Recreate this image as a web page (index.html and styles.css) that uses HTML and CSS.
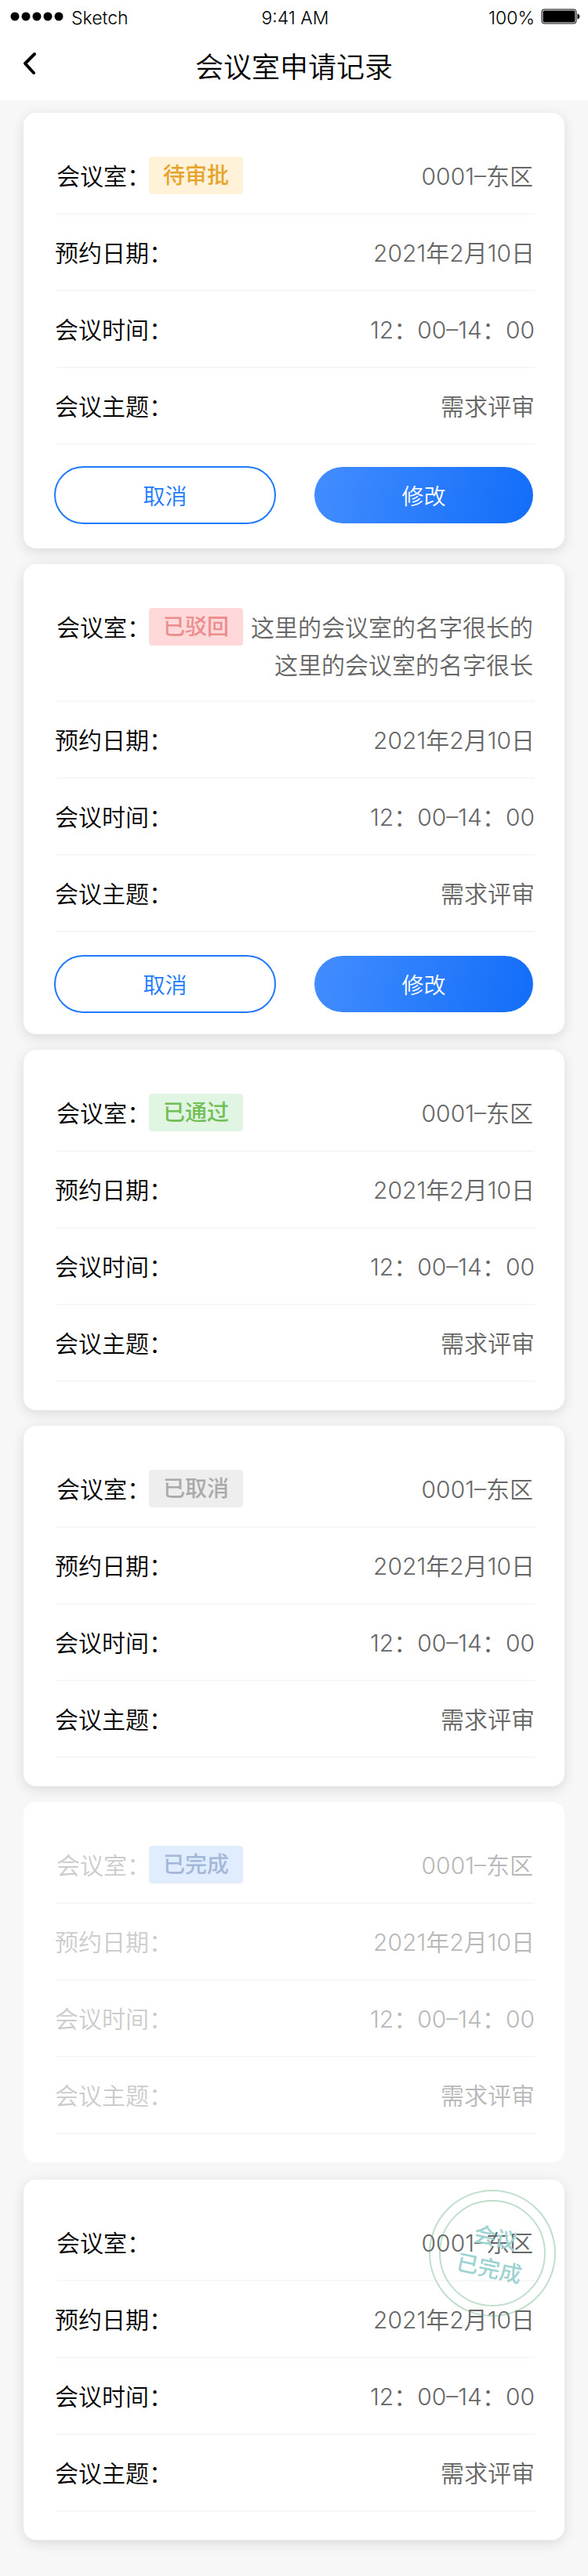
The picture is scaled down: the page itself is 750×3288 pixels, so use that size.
FILE: index.html
```html
<!DOCTYPE html>
<html lang="zh-CN">
<head>
<meta charset="utf-8">
<meta name="viewport" content="width=device-width, initial-scale=1">
<title>会议室申请记录</title>
<link rel="stylesheet" href="styles.css">
</head>
<body>
<header class="header">
  <div class="status">
    <div class="status-left">
      <svg class="signal" width="70" height="12" viewBox="0 0 70 12" aria-hidden="true"><circle cx="6" cy="6" r="5.5"/><circle cx="20" cy="6" r="5.5"/><circle cx="34" cy="6" r="5.5"/><circle cx="48" cy="6" r="5.5"/><circle cx="62" cy="6" r="5.5"/></svg>
      <span>Sketch</span>
    </div>
    <span class="status-time">9:41 AM</span>
    <div class="status-right">
      <span>100%</span>
      <svg class="battery" width="50" height="20" viewBox="0 0 50 20" aria-hidden="true"><rect x="1" y="1" width="44" height="18" rx="3" fill="none" stroke="#000"/><rect x="2.5" y="2.5" width="41" height="15" rx="1.5"/><path d="M46.500 6.500c2 .5 2.800 1.800 2.800 3.500s-.8 3-2.800 3.500z"/></svg>
    </div>
  </div>
  <nav class="nav">
    <button class="back" type="button" aria-label="返回"><svg width="18" height="30" viewBox="0 0 18 30" aria-hidden="true"><path d="M15 3 3 15l11 12"/></svg></button>
    <h1 class="title">会议室申请记录</h1>
  </nav>
</header>
<main class="list">
  <article class="card">
    <dl class="rows">
      <div class="row row-room"><dt>会议室：</dt><dd class="badge badge-pending">待审批</dd><dd class="value">0001–东区</dd></div>
      <div class="row"><dt>预约日期：</dt><dd class="value">2021年2月10日</dd></div>
      <div class="row"><dt>会议时间：</dt><dd class="value">12：00–14：00</dd></div>
      <div class="row"><dt>会议主题：</dt><dd class="value">需求评审</dd></div>
    </dl>
    <div class="actions"><button class="btn btn-outline" type="button">取消</button><button class="btn btn-primary" type="button">修改</button></div>
  </article>
  <article class="card">
    <dl class="rows">
      <div class="row row-room row-multiline"><dt>会议室：</dt><dd class="badge badge-rejected">已驳回</dd><dd class="value">这里的会议室的名字很长的这里的会议室的名字很长</dd></div>
      <div class="row"><dt>预约日期：</dt><dd class="value">2021年2月10日</dd></div>
      <div class="row"><dt>会议时间：</dt><dd class="value">12：00–14：00</dd></div>
      <div class="row"><dt>会议主题：</dt><dd class="value">需求评审</dd></div>
    </dl>
    <div class="actions actions-low"><button class="btn btn-outline" type="button">取消</button><button class="btn btn-primary" type="button">修改</button></div>
  </article>
  <article class="card">
    <dl class="rows rows-only">
      <div class="row row-room"><dt>会议室：</dt><dd class="badge badge-passed">已通过</dd><dd class="value">0001–东区</dd></div>
      <div class="row"><dt>预约日期：</dt><dd class="value">2021年2月10日</dd></div>
      <div class="row"><dt>会议时间：</dt><dd class="value">12：00–14：00</dd></div>
      <div class="row"><dt>会议主题：</dt><dd class="value">需求评审</dd></div>
    </dl>
  </article>
  <article class="card">
    <dl class="rows rows-only">
      <div class="row row-room"><dt>会议室：</dt><dd class="badge badge-cancelled">已取消</dd><dd class="value">0001–东区</dd></div>
      <div class="row"><dt>预约日期：</dt><dd class="value">2021年2月10日</dd></div>
      <div class="row"><dt>会议时间：</dt><dd class="value">12：00–14：00</dd></div>
      <div class="row"><dt>会议主题：</dt><dd class="value">需求评审</dd></div>
    </dl>
  </article>
  <article class="card card-faded">
    <dl class="rows rows-only">
      <div class="row row-room"><dt>会议室：</dt><dd class="badge badge-done">已完成</dd><dd class="value">0001–东区</dd></div>
      <div class="row"><dt>预约日期：</dt><dd class="value">2021年2月10日</dd></div>
      <div class="row"><dt>会议时间：</dt><dd class="value">12：00–14：00</dd></div>
      <div class="row"><dt>会议主题：</dt><dd class="value">需求评审</dd></div>
    </dl>
  </article>
  <article class="card card-stamped">
    <dl class="rows rows-only">
      <div class="row row-room"><dt>会议室：</dt><dd class="value">0001–东区</dd></div>
      <div class="row"><dt>预约日期：</dt><dd class="value">2021年2月10日</dd></div>
      <div class="row"><dt>会议时间：</dt><dd class="value">12：00–14：00</dd></div>
      <div class="row"><dt>会议主题：</dt><dd class="value">需求评审</dd></div>
    </dl>
    <div class="stamp"><div class="stamp-text">会议<br>已完成</div></div>
  </article>
</main>
</body>
</html>
```

FILE: styles.css
```css
* { box-sizing: border-box; }
body {
  margin: 0;
  background: #f7f7f7;
  color: #000;
  font-family: Inter, "Noto Sans CJK SC", sans-serif;
  font-size: 30px;
  font-weight: 350;
  line-height: 48px;
}
button { font-family: inherit; cursor: pointer; }

.header { background: #fff; }
.status {
  display: grid;
  grid-template-columns: 1fr auto 1fr;
  align-items: center;
  height: 40px;
  padding: 6px 10px 0 13px;
  font-size: 23px;
  line-height: 34px;
}
.status-left, .status-right { display: flex; align-items: center; gap: 8px; }
.status-right { justify-content: flex-end; }
.signal, .battery { margin-bottom: 4px; }

.nav {
  display: grid;
  grid-template-columns: 88px 1fr 88px;
  align-items: center;
  height: 88px;
}
.back {
  display: flex;
  align-items: center;
  height: 88px;
  padding: 0 0 6px 29px;
  border: 0;
  background: none;
}
.back path {
  fill: none;
  stroke: #000;
  stroke-width: 4;
  stroke-linecap: round;
  stroke-linejoin: round;
}
.title {
  margin: 0;
  padding-top: 4px;
  font-size: 36px;
  font-weight: 350;
  text-align: center;
}

.list {
  display: flex;
  flex-direction: column;
  gap: 20px;
  padding: 16px 30px 46px;
}
.card {
  position: relative;
  padding: 32px 38px 0 40px;
  border-radius: 16px;
  background: #fff;
  box-shadow: 0 4px 16px rgba(0, 0, 0, 0.12);
}
.card-faded { box-shadow: none; }
.card-stamped { margin-top: 2px; }

.rows { margin: 0; }
.rows-only { padding-bottom: 36px; }
.row {
  display: flex;
  align-items: flex-start;
  margin-left: 2px;
  padding: 24px 0 23px;
  border-bottom: 2px solid #f7f7f7;
}
.row-room { padding-right: 2px; }
.row-multiline { padding-bottom: 21px; }
.row dt {
  flex: none;
  margin-left: -2px;
  font-family: "Noto Sans CJK SC", sans-serif;
  line-height: 46px;
  white-space: nowrap;
}
.row-room dt { width: 118px; margin-left: 0; }
.row dd { margin: 0; }
.row .value {
  flex: 1;
  padding-top: 1px;
  color: #666;
  text-align: right;
}
.card-faded dt { color: #ccc; }
.card-faded .value { color: #b8b8b8; }

.badge {
  flex: none;
  width: 120px;
  border-radius: 4px;
  font-size: 28px;
  font-weight: 500;
  text-align: center;
}
.badge-pending { background: #fff2d9; color: #e6a32e; }
.badge-rejected { background: #ffd9d9; color: #eb8d8d; }
.badge-passed { background: #e0f5e2; color: #73bf57; }
.badge-cancelled { background: #eee; color: #aaa; }
.badge-done { background: #e0ecff; color: #a3b8d9; }

.actions {
  display: flex;
  gap: 48px;
  margin-left: -1px;
  padding: 27px 1px 31px 0;
}
.actions-low { padding: 29px 1px 27px 0; }
.btn {
  flex: 1;
  height: 74px;
  border-radius: 37px;
  font-size: 28px;
  font-weight: 350;
}
.btn-outline { border: 2px solid #2079ff; background: #fff; color: #2079ff; }
.btn-primary {
  border: 1px solid transparent;
  background: linear-gradient(105deg, #438dff, #126df8) padding-box;
  color: #fff;
}

/* Round seal laid over the finished record */
.stamp {
  position: absolute;
  top: 13px;
  right: 11px;
  display: flex;
  align-items: center;
  justify-content: center;
  width: 162px;
  height: 162px;
  border: 2px solid rgba(82, 163, 115, 0.36);
  border-radius: 50%;
}
.stamp::before {
  content: "";
  position: absolute;
  inset: 11px;
  border: 2px solid rgba(82, 163, 115, 0.36);
  border-radius: 50%;
}
.stamp-text {
  transform: rotate(12deg);
  color: #9fd3d3;
  font-size: 28px;
  line-height: 40px;
  font-weight: 500;
  text-align: center;
}
```
